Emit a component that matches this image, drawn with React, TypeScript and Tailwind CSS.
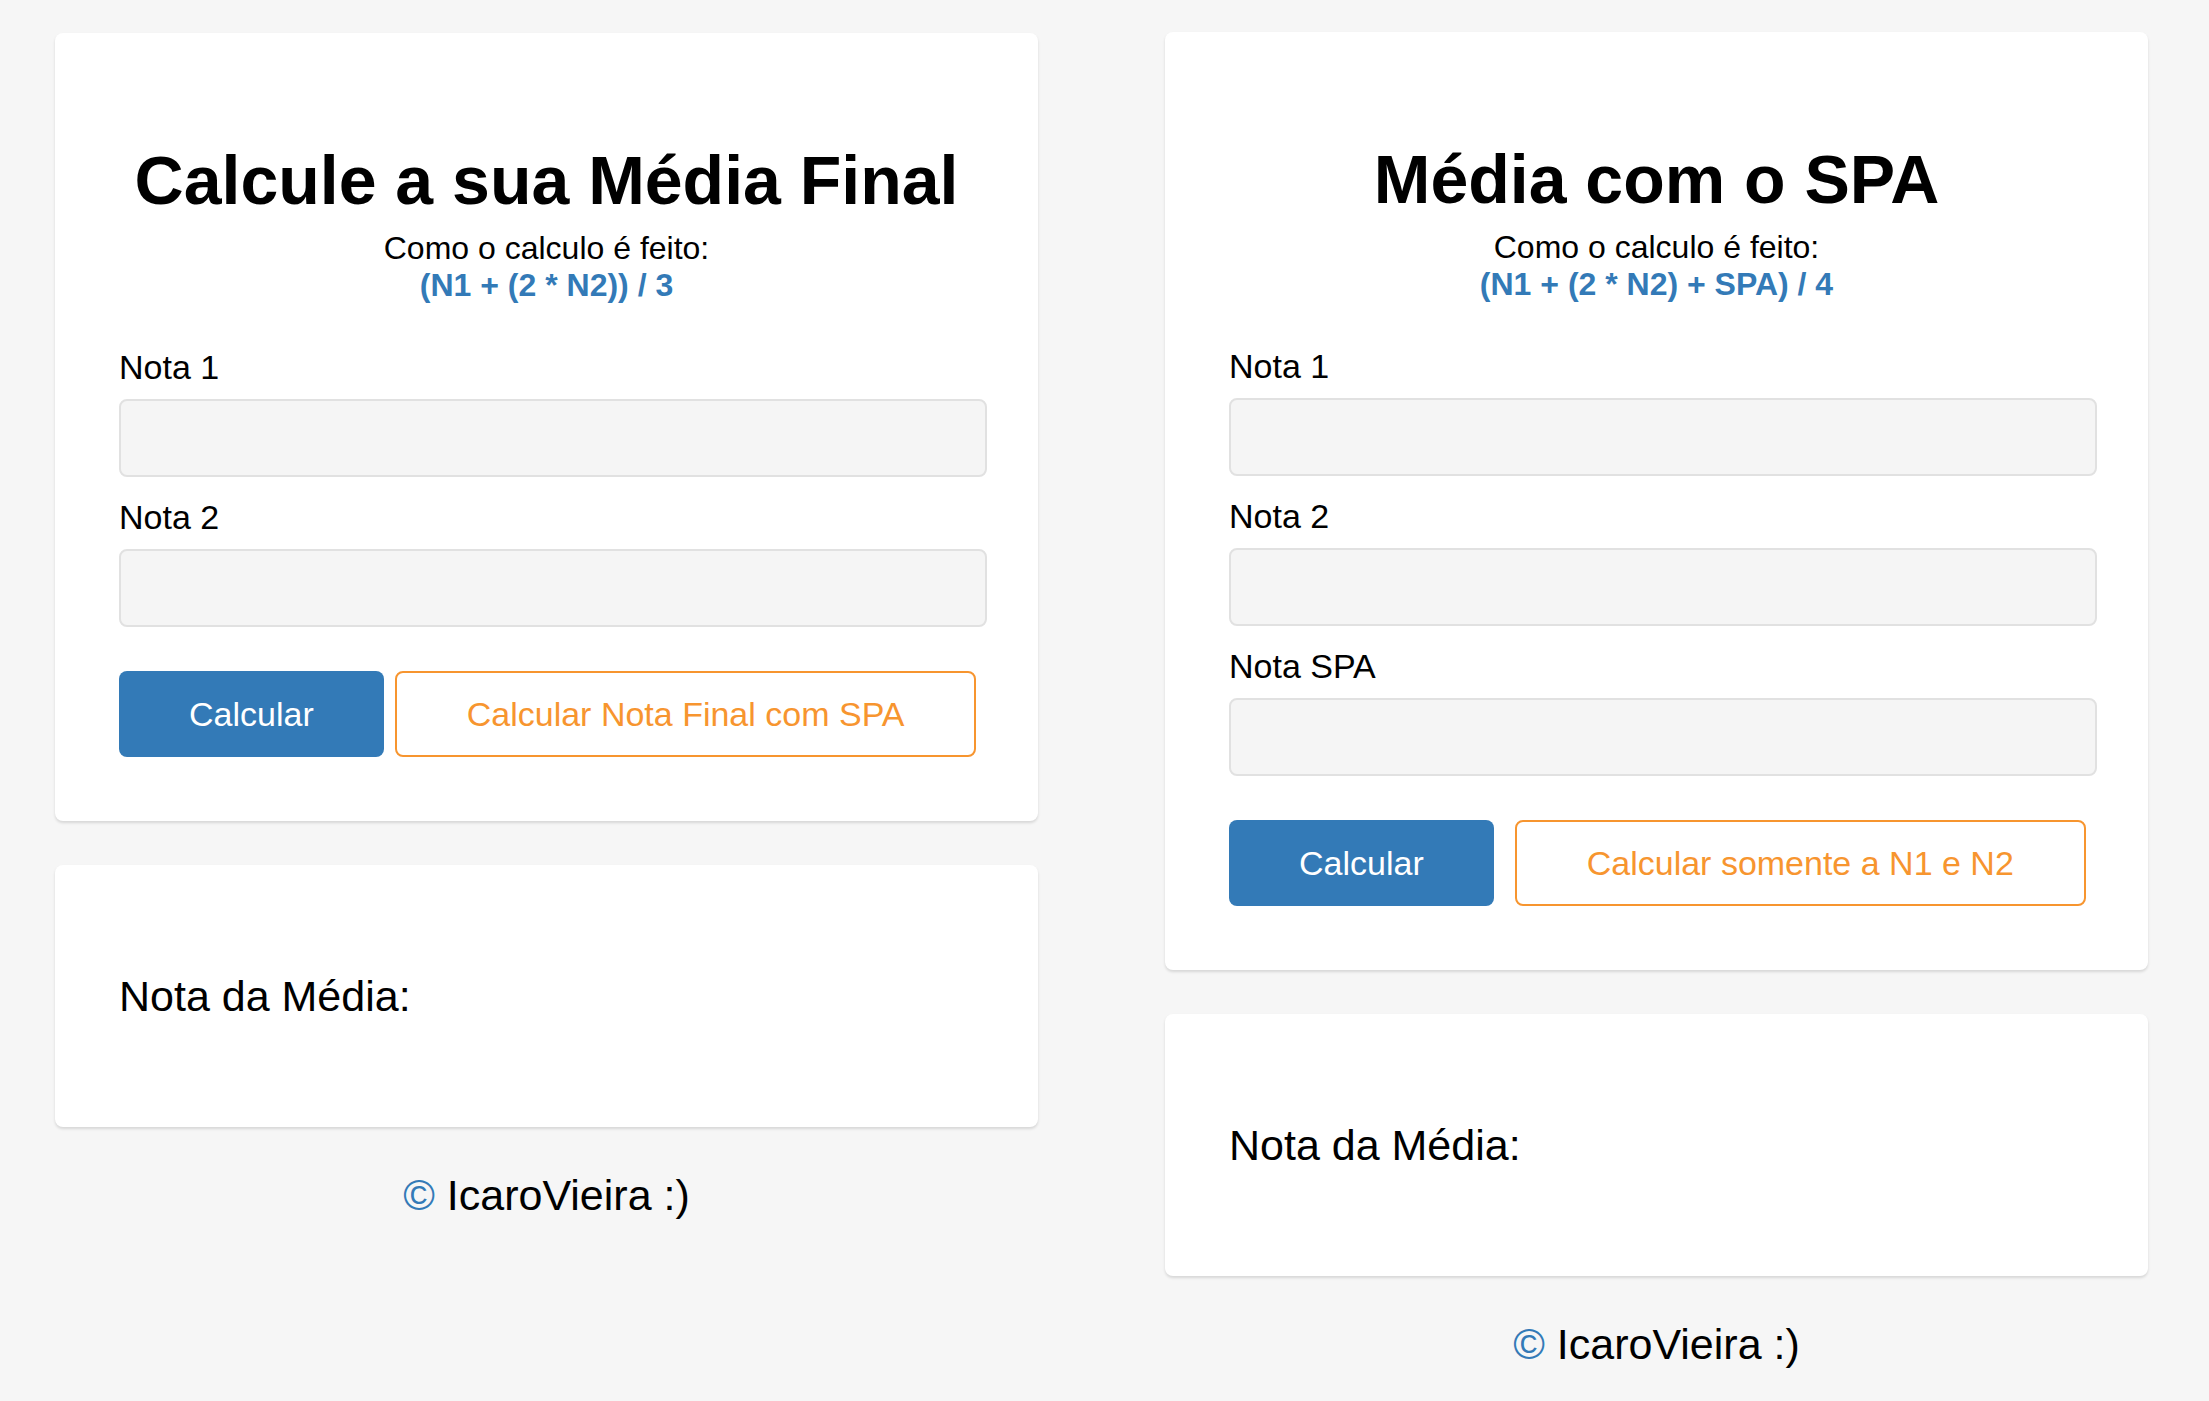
const font = "font-['Liberation_Sans',Arial,sans-serif]";

type CalcProps = {
  title: string;
  formula: string;
  fields: string[];
  altLabel: string;
  btnGap: string;
  top: string;
};

function Field({ label }: { label: string }) {
  return (
    <div className="flex flex-col">
      <label className="text-[34px] leading-[39px] text-black">{label}</label>
      <input
        type="text"
        className="mt-[12px] h-[78px] w-[868px] shrink-0 rounded-lg border-2 border-[#e1e1e1] bg-[#f5f5f5] outline-none"
      />
    </div>
  );
}

function CalcColumn({ title, formula, fields, altLabel, btnGap, top }: CalcProps) {
  return (
    <div className="flex w-[983px] flex-col">
      <div className={`${top} rounded-lg bg-white px-[64px] pt-[108px] pb-[64px] shadow-[0_2px_3px_rgba(0,0,0,0.13)]`}>
        <h1 className="text-center text-[68px] font-bold leading-[78px] text-black">{title}</h1>
        <p className="mt-[11px] text-center text-[32px] leading-[37px] text-black">Como o calculo é feito:</p>
        <p className="text-center text-[32px] font-bold leading-[37px] text-[#337ab7]">{formula}</p>

        <div className="mt-[44px] flex flex-col gap-[21px]">
          {fields.map((f) => (
            <Field key={f} label={f} />
          ))}
        </div>

        <div className={`mt-[44px] flex ${btnGap}`}>
          <button className="h-[86px] shrink-0 whitespace-nowrap rounded-lg bg-[#337ab7] px-[70px] text-[34px] text-white">
            Calcular
          </button>
          <button className="h-[86px] shrink-0 whitespace-nowrap rounded-lg border-2 border-[#f7952f] bg-white px-[70px] text-[34px] text-[#f7952f]">
            {altLabel}
          </button>
        </div>
      </div>

      <div className="mt-[44px] flex h-[262px] items-center rounded-lg bg-white px-[64px] shadow-[0_2px_3px_rgba(0,0,0,0.13)]">
        <p className="text-[43px] leading-[49px] text-black">Nota da Média:</p>
      </div>

      <p className="mt-[44px] text-center text-[43px] leading-[49px] text-black">
        <span className="text-[#337ab7]">©</span> IcaroVieira :)
      </p>
    </div>
  );
}

export default function App() {
  return (
    <div className={`${font} flex min-h-screen items-start gap-[127px] bg-[#f6f6f6] px-[55px]`}>
      <CalcColumn
        top="mt-[33px]"
        title="Calcule a sua Média Final"
        formula="(N1 + (2 * N2)) / 3"
        fields={["Nota 1", "Nota 2"]}
        altLabel="Calcular Nota Final com SPA"
        btnGap="gap-[11px]"
      />
      <CalcColumn
        top="mt-[32px]"
        title="Média com o SPA"
        formula="(N1 + (2 * N2) + SPA) / 4"
        fields={["Nota 1", "Nota 2", "Nota SPA"]}
        altLabel="Calcular somente a N1 e N2"
        btnGap="gap-[21px]"
      />
    </div>
  );
}
